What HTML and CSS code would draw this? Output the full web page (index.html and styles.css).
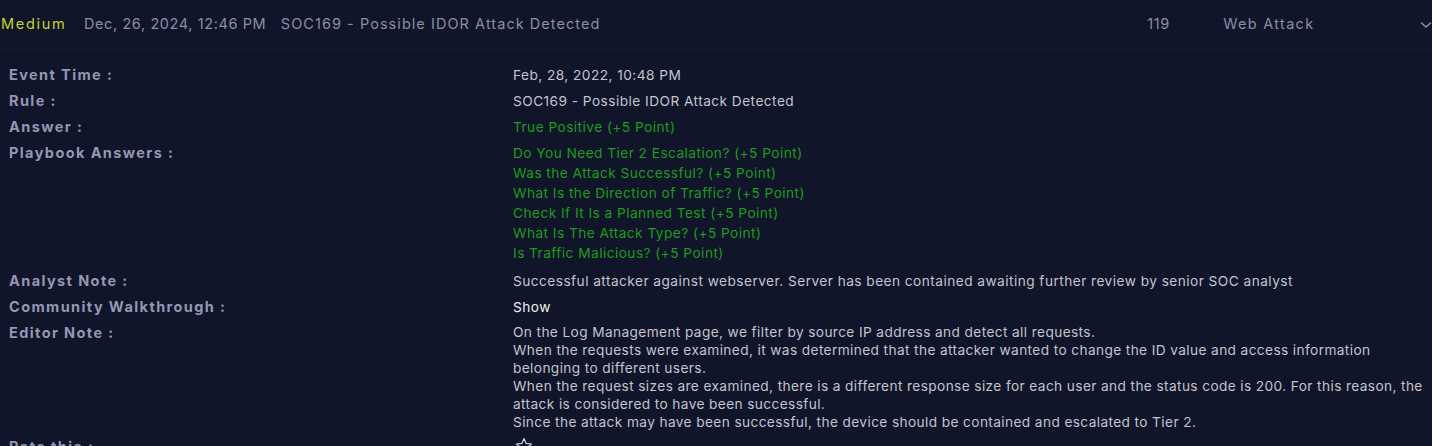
FILE: index.html
```html
<!DOCTYPE html>
<html>
<head>
<meta charset="utf-8">
<link rel="stylesheet" href="styles.css">
</head>
<body>
<div class="alert">
  <div class="head">
    <span class="c-sev">Medium</span>
    <span class="c-date">Dec, 26, 2024, 12:46 PM</span>
    <span class="c-title">SOC169 - Possible IDOR Attack Detected</span>
    <span class="c-id">119</span>
    <span class="c-type">Web Attack</span>
    <span class="c-chev"><svg width="12" height="8" viewBox="0 0 12 8"><path d="M1 1.5 L6 6 L11 1.5" fill="none" stroke="#8a8fa3" stroke-width="1.6"/></svg></span>
  </div>
  <div class="details">
    <div class="lbl">Event Time :</div>
    <div class="val">Feb, 28, 2022, 10:48 PM</div>
    <div class="lbl">Rule :</div>
    <div class="val">SOC169 - Possible IDOR Attack Detected</div>
    <div class="lbl">Answer :</div>
    <div class="val green">True Positive (+5 Point)</div>
    <div class="lbl">Playbook Answers :</div>
    <div class="val green list">
      <div>Do You Need Tier 2 Escalation? (+5 Point)</div>
      <div>Was the Attack Successful? (+5 Point)</div>
      <div>What Is the Direction of Traffic? (+5 Point)</div>
      <div>Check If It Is a Planned Test (+5 Point)</div>
      <div>What Is The Attack Type? (+5 Point)</div>
      <div>Is Traffic Malicious? (+5 Point)</div>
    </div>
    <div class="lbl">Analyst Note :</div>
    <div class="val">Successful attacker against webserver. Server has been contained awaiting further review by senior SOC analyst</div>
    <div class="lbl">Community Walkthrough :</div>
    <div class="val white">Show</div>
    <div class="lbl">Editor Note :</div>
    <div class="val note">On the Log Management page, we filter by source IP address and detect all requests.<br>When the requests were examined, it was determined that the attacker wanted to change the ID value and access information belonging to different users.<br>When the request sizes are examined, there is a different response size for each user and the status code is 200. For this reason, the attack is considered to have been successful.<br>Since the attack may have been successful, the device should be contained and escalated to Tier 2.</div>
    <div class="lbl">Rate this :</div>
    <div class="val"><svg class="star" width="18" height="18" viewBox="0 0 24 24"><path d="M12 2 L14.9 8.6 L22 9.3 L16.6 14 L18.2 21 L12 17.3 L5.8 21 L7.4 14 L2 9.3 L9.1 8.6 Z" fill="none" stroke="#d0d2dc" stroke-width="1.6" stroke-linejoin="round"/></svg></div>
  </div>
</div>
</body>
</html>
```

FILE: styles.css
```css
html, body {
  margin: 0;
  padding: 0;
  background: #10152a;
  overflow: hidden;
}
body {
  font-family: Inter, "Noto Sans", sans-serif;
  width: 1432px;
  height: 446px;
}
.head {
  display: flex;
  align-items: center;
  height: 47px;
  padding-bottom: 2px;
  border-bottom: 1px solid #161c33;
  color: #8a8fa3;
  font-size: 14.5px;
  letter-spacing: 0.6px;
  white-space: nowrap;
}
.c-sev { width: 84px; color: #c6d22c; padding-left: 1px; box-sizing: border-box; letter-spacing: 1.7px; }
.c-date { width: 197px; letter-spacing: 0.6px; }
.c-title { width: 867px; letter-spacing: 1.05px; }
.c-id { width: 76px; }
.c-type { width: 197px; letter-spacing: 1.3px; }
.c-chev { display: flex; align-items: center; padding-top: 2px; }
.details {
  display: grid;
  grid-template-columns: 504px 1fr;
  padding: 12px 0 0 9px;
  font-size: 13.7px;
}
.lbl {
  color: #9597b3;
  font-weight: 700;
  font-size: 14.5px;
  letter-spacing: 1.4px;
  line-height: 20px;
  padding: 3px 0;
}
.val {
  color: #c2c4ce;
  line-height: 20px;
  padding: 3px 0;
  letter-spacing: 0.45px;
}
.green { color: #1e9c1e; }
.white { color: #eceef4; }
.list { padding-bottom: 5px; }
.note { line-height: 18px; letter-spacing: 0.38px; }
.star { display: block; margin-left: 2px; }
```
